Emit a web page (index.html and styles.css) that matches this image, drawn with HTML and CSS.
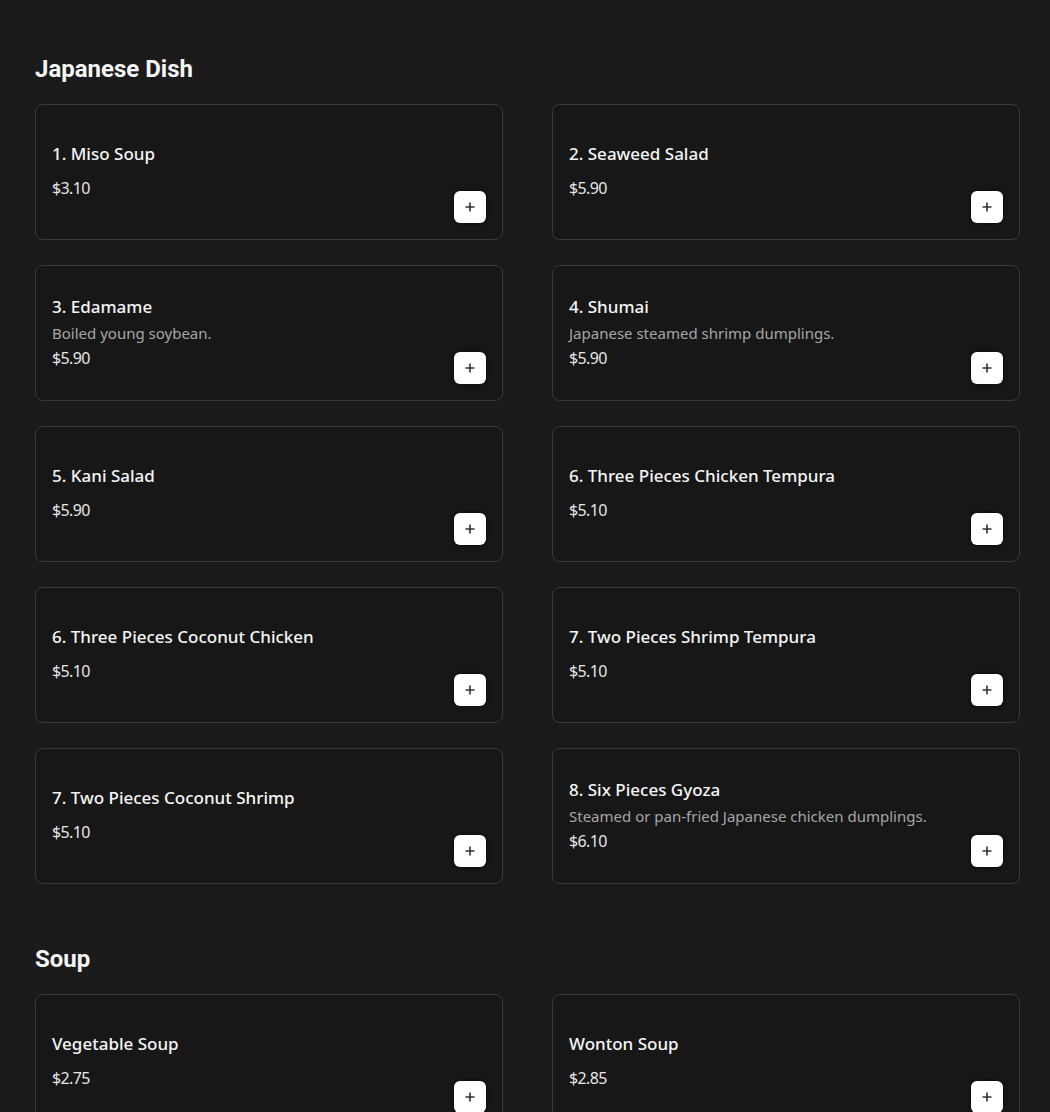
FILE: index.html
```html
<!DOCTYPE html>
<html lang="en">
<head>
<meta charset="utf-8">
<title>Menu</title>
<link rel="stylesheet" href="styles.css">
</head>
<body>
<main class="menu">
  <section class="section">
    <h2 class="section-title">Japanese Dish</h2>
    <div class="grid">
      <div class="card"><div class="info"><div class="name">1. Miso Soup</div><div class="price">$3.10</div></div><button class="add"><svg viewBox="0 0 12 12" width="12" height="12"><path d="M6 1.5v9M1.5 6h9" stroke="#333" stroke-width="1.6" fill="none"/></svg></button></div>
      <div class="card"><div class="info"><div class="name">2. Seaweed Salad</div><div class="price">$5.90</div></div><button class="add"><svg viewBox="0 0 12 12" width="12" height="12"><path d="M6 1.5v9M1.5 6h9" stroke="#333" stroke-width="1.6" fill="none"/></svg></button></div>
      <div class="card"><div class="info"><div class="name">3. Edamame</div><div class="desc">Boiled young soybean.</div><div class="price">$5.90</div></div><button class="add"><svg viewBox="0 0 12 12" width="12" height="12"><path d="M6 1.5v9M1.5 6h9" stroke="#333" stroke-width="1.6" fill="none"/></svg></button></div>
      <div class="card"><div class="info"><div class="name">4. Shumai</div><div class="desc">Japanese steamed shrimp dumplings.</div><div class="price">$5.90</div></div><button class="add"><svg viewBox="0 0 12 12" width="12" height="12"><path d="M6 1.5v9M1.5 6h9" stroke="#333" stroke-width="1.6" fill="none"/></svg></button></div>
      <div class="card"><div class="info"><div class="name">5. Kani Salad</div><div class="price">$5.90</div></div><button class="add"><svg viewBox="0 0 12 12" width="12" height="12"><path d="M6 1.5v9M1.5 6h9" stroke="#333" stroke-width="1.6" fill="none"/></svg></button></div>
      <div class="card"><div class="info"><div class="name">6. Three Pieces Chicken Tempura</div><div class="price">$5.10</div></div><button class="add"><svg viewBox="0 0 12 12" width="12" height="12"><path d="M6 1.5v9M1.5 6h9" stroke="#333" stroke-width="1.6" fill="none"/></svg></button></div>
      <div class="card"><div class="info"><div class="name">6. Three Pieces Coconut Chicken</div><div class="price">$5.10</div></div><button class="add"><svg viewBox="0 0 12 12" width="12" height="12"><path d="M6 1.5v9M1.5 6h9" stroke="#333" stroke-width="1.6" fill="none"/></svg></button></div>
      <div class="card"><div class="info"><div class="name">7. Two Pieces Shrimp Tempura</div><div class="price">$5.10</div></div><button class="add"><svg viewBox="0 0 12 12" width="12" height="12"><path d="M6 1.5v9M1.5 6h9" stroke="#333" stroke-width="1.6" fill="none"/></svg></button></div>
      <div class="card"><div class="info"><div class="name">7. Two Pieces Coconut Shrimp</div><div class="price">$5.10</div></div><button class="add"><svg viewBox="0 0 12 12" width="12" height="12"><path d="M6 1.5v9M1.5 6h9" stroke="#333" stroke-width="1.6" fill="none"/></svg></button></div>
      <div class="card"><div class="info"><div class="name">8. Six Pieces Gyoza</div><div class="desc">Steamed or pan-fried Japanese chicken dumplings.</div><div class="price">$6.10</div></div><button class="add"><svg viewBox="0 0 12 12" width="12" height="12"><path d="M6 1.5v9M1.5 6h9" stroke="#333" stroke-width="1.6" fill="none"/></svg></button></div>
    </div>
  </section>
  <section class="section">
    <h2 class="section-title">Soup</h2>
    <div class="grid">
      <div class="card"><div class="info"><div class="name">Vegetable Soup</div><div class="price">$2.75</div></div><button class="add"><svg viewBox="0 0 12 12" width="12" height="12"><path d="M6 1.5v9M1.5 6h9" stroke="#333" stroke-width="1.6" fill="none"/></svg></button></div>
      <div class="card"><div class="info"><div class="name">Wonton Soup</div><div class="price">$2.85</div></div><button class="add"><svg viewBox="0 0 12 12" width="12" height="12"><path d="M6 1.5v9M1.5 6h9" stroke="#333" stroke-width="1.6" fill="none"/></svg></button></div>
    </div>
  </section>
</main>
</body>
</html>
```
FILE: styles.css
```css
html, body {
  margin: 0;
  padding: 0;
  background: #1b1b1b;
}
body {
  font-family: "Noto Sans", "Open Sans", sans-serif;
  color: #f2f2f2;
}
.menu {
  padding: 53px 30px 40px 35px;
}
.section + .section {
  margin-top: 59px;
}
.section-title {
  margin: 0 0 19px;
  font-family: Roboto, "Liberation Sans", sans-serif;
  font-weight: 700;
  font-size: 24px;
  line-height: 32px;
  color: #f5f5f5;
}
.grid {
  display: grid;
  grid-template-columns: 468px 468px;
  column-gap: 49px;
  row-gap: 25px;
}
.card {
  box-sizing: border-box;
  height: 136px;
  border: 1px solid #3a3a3a;
  border-radius: 8px;
  background: #171717;
  padding: 16px;
  display: flex;
  align-items: center;
  justify-content: space-between;
}
.info {
  display: flex;
  flex-direction: column;
}
.name {
  font-size: 17px;
  line-height: 22px;
  margin-bottom: 4px;
  font-weight: 500;
  color: #f5f5f5;
}
.desc {
  font-size: 15px;
  line-height: 22px;
  color: #a6a6a6;
}
.price {
  font-size: 16px;
  line-height: 24px;
  letter-spacing: -0.6px;
  margin-top: 2px;
  color: #e6e6e6;
}
.name + .price {
  margin-top: 7px;
  margin-bottom: 2px;
}
.add {
  align-self: flex-end;
  width: 32px;
  height: 32px;
  border: none;
  border-radius: 6px;
  background: #ffffff;
  padding: 0;
  display: flex;
  align-items: center;
  justify-content: center;
  box-shadow: 0 0 4px rgba(0, 0, 0, 0.6);
  cursor: pointer;
}
.add svg {
  display: block;
}
```
